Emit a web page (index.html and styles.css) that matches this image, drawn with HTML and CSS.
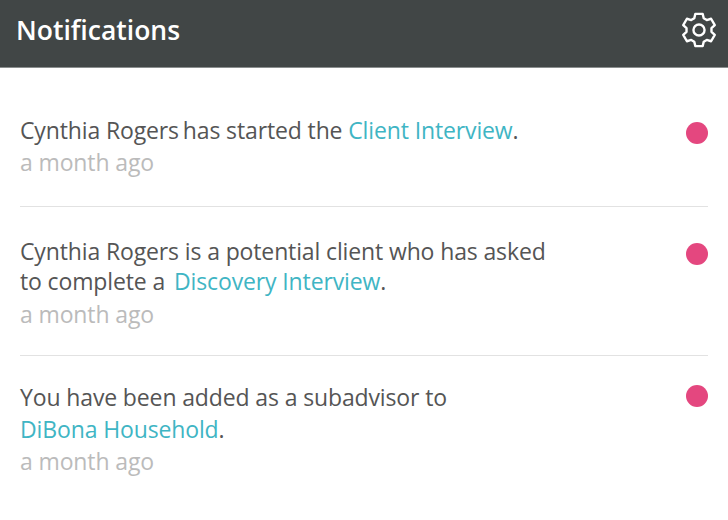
FILE: index.html
```html
<!DOCTYPE html>
<html lang="en">
<head>
    <meta charset="UTF-8">
    <title>Notifications</title>
    <link rel="stylesheet" href="styles.css">
</head>
<body>
    <header class="top-bar">
        <h1>Notifications</h1>
        <svg class="gear" viewBox="0 0 24 24" fill="none" stroke="#fff" stroke-width="1.6" stroke-linejoin="round">
            <circle cx="12" cy="12" r="3.7"/>
            <path d="M8.85 4.21 9.53 1.28H14.47L15.15 4.21 17.17 5.38 20.05 4.5 22.52 8.78 20.32 10.83V13.17L22.52 15.22 20.05 19.5 17.17 18.62 15.15 19.79 14.47 22.72H9.53L8.85 19.79 6.83 18.62 3.95 19.5 1.48 15.22 3.68 13.17V10.83L1.48 8.78 3.95 4.5 6.83 5.38Z"/>
        </svg>
    </header>
    <div class="list">
        <div class="item first">
            <div class="text">
                <p><span class="name">Cynthia Rogers</span> has started the <a href="#">Client Interview</a>.</p>
                <p class="time">a month ago</p>
            </div>
            <span class="dot"></span>
        </div>
        <div class="item second">
            <div class="text">
                <p>Cynthia Rogers is a potential client who has asked<br>to complete a <a class="spaced" href="#">Discovery Interview</a>.</p>
                <p class="time">a month ago</p>
            </div>
            <span class="dot"></span>
        </div>
        <div class="item third">
            <div class="text">
                <p>You have been added as a subadvisor to<br><a href="#">DiBona Household</a>.</p>
                <p class="time">a month ago</p>
            </div>
            <span class="dot"></span>
        </div>
    </div>
</body>
</html>
```

FILE: styles.css
```css
body {
    margin: 0;
    font-family: "Open Sans", sans-serif;
    background-color: #fff;
    color: #555;
}
.top-bar {
    height: 68px;
    background-color: #414646;
    border-bottom: 1px solid #8a8e8e;
    display: flex;
    align-items: center;
    justify-content: space-between;
    padding: 0 11px 8px 16px;
    box-sizing: border-box;
}
.top-bar h1 {
    margin: 0;
    font-size: 26.5px;
    font-weight: 600;
    color: #fff;
}
.gear {
    width: 36px;
    height: 36px;
}
.list {
    padding: 0 20px;
}
.item {
    display: flex;
    justify-content: space-between;
    border-bottom: 1px solid #e2e2e2;
}
.first {
    padding: 47px 0 28px;
}
.second {
    padding: 29px 0 26px;
}
.third {
    padding: 25px 0 0;
    border-bottom: none;
}
.text p {
    margin: 0;
    font-size: 23px;
    line-height: 31px;
    letter-spacing: -0.13px;
}
.second .text p {
    line-height: 30px;
}
.third .text p {
    line-height: 32px;
}
.text .time {
    margin-top: 1px;
    color: #bbb;
}
.second .text .time {
    margin-top: 3px;
}
.third .text .time {
    margin-top: 0;
}
.text a {
    color: #3fb5c4;
    text-decoration: none;
}
.text .spaced {
    margin-left: 3px;
}
.name {
    margin-right: -2px;
}
.dot {
    width: 22px;
    height: 22px;
    border-radius: 50%;
    background-color: #e4477f;
    margin-top: 7px;
}
.third .dot {
    margin-top: 4px;
}
```
